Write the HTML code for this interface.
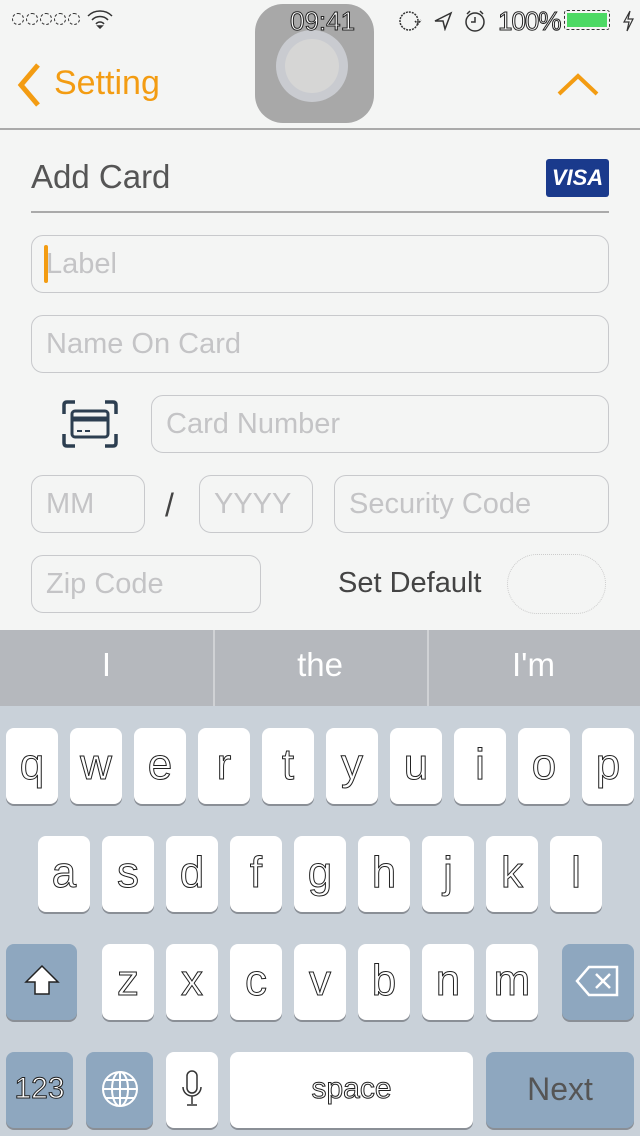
<!DOCTYPE html>
<html><head><meta charset="utf-8"><style>
*{margin:0;padding:0;box-sizing:border-box}
body{width:640px;height:1136px;overflow:hidden;background:#f4f5f4;font-family:"Liberation Sans",sans-serif;position:relative}
.a{position:absolute}
.f{position:absolute;border:1.5px solid #c8c9cc;border-radius:12px;color:#c4c4c6;font-size:29px;padding-left:14px;display:flex;align-items:center}
.kb{position:absolute;left:0;top:706px;width:640px;height:430px;background:#c9d1d9}
.k{position:absolute;width:52px;height:76px;background:#fff;border-radius:8px;box-shadow:0 2px 0 #8a8f96;font-size:44px;color:#fff;-webkit-text-stroke:1px #222;display:flex;align-items:center;justify-content:center;padding-bottom:2px}
.d{background:#8ea7bf}
.st{color:#fff;-webkit-text-stroke:1px #222}
</style></head><body>
<div class="a" style="left:12px;top:13px;display:flex;gap:2px">
<span style="width:12px;height:12px;border:1.5px dashed #333;border-radius:50%"></span><span style="width:12px;height:12px;border:1.5px dashed #333;border-radius:50%"></span><span style="width:12px;height:12px;border:1.5px dashed #333;border-radius:50%"></span><span style="width:12px;height:12px;border:1.5px dashed #333;border-radius:50%"></span><span style="width:12px;height:12px;border:1.5px dashed #333;border-radius:50%"></span></div>
<svg class="a" style="left:86px;top:9px" width="28" height="20" viewBox="0 0 28 20" fill="none" stroke="#333" stroke-width="1.5"><path d="M2 7a17 17 0 0 1 24 0M6 11a11 11 0 0 1 16 0M10 15a5 5 0 0 1 8 0"/><path d="M14 19l-2-2h4z"/></svg>
<div class="a" style="left:255px;top:4px;width:119px;height:119px;border-radius:28px;background:#a8a8a8"></div>
<div class="a" style="left:276px;top:30px;width:72px;height:72px;border-radius:50%;background:#c9cbd0"></div>
<div class="a" style="left:285px;top:39px;width:54px;height:54px;border-radius:50%;background:#d6d6d5"></div>
<div class="a st" style="left:290px;top:6px;font-size:26px">09:41</div>
<svg class="a" style="left:398px;top:9px" width="26" height="24" fill="none" stroke="#333" stroke-width="1.5" stroke-dasharray="2 1"><circle cx="11" cy="12" r="9"/><path d="M17 12l3 3 3-4"/></svg>
<svg class="a" style="left:433px;top:11px" width="20" height="20" fill="none" stroke="#333" stroke-width="1.5"><path d="M2 10L18 2L12 18L10 10Z"/></svg>
<svg class="a" style="left:463px;top:9px" width="24" height="24" fill="none" stroke="#333" stroke-width="1.5"><circle cx="12" cy="13" r="9"/><path d="M12 8v5h-4M4 5l3-3M20 5l-3-3"/></svg>
<div class="a st" style="left:498px;top:6px;font-size:26px;letter-spacing:-1px">100%</div>
<div class="a" style="left:564px;top:10px;width:46px;height:20px;border:1.5px dashed #333;border-radius:3px;padding:2px"><div style="width:100%;height:100%;background:#4cd964"></div></div>
<svg class="a" style="left:620px;top:9px" width="16" height="24" fill="none" stroke="#333" stroke-width="1.2"><path d="M10 2L4 13h5l-2 9 6-12H8z"/></svg>
<svg class="a" style="left:14px;top:62px" width="30" height="46" fill="none" stroke="#f39c12" stroke-width="5"><path d="M24 3L7 23l17 20"/></svg>
<div class="a" style="left:54px;top:64px;font-size:34px;color:#f39c12">Setting</div>
<svg class="a" style="left:556px;top:70px" width="44" height="30" fill="none" stroke="#f39c12" stroke-width="4"><path d="M3 24L22 6l19 18"/></svg>
<div class="a" style="left:0;top:128px;width:640px;height:1.5px;background:#aaa"></div>
<div class="a" style="left:31px;top:158px;font-size:33px;color:#555">Add Card</div>
<div class="a" style="left:546px;top:159px;width:63px;height:38px;background:#1a3a8c;border-radius:3px;color:#fff;font-weight:bold;font-style:italic;font-size:22px;text-align:center;line-height:38px">VISA</div>
<div class="a" style="left:31px;top:211px;width:578px;height:1.5px;background:#aaa"></div>
<div class="f" style="left:31px;top:235px;width:578px;height:58px">Label</div>
<div class="a" style="left:44px;top:245px;width:4px;height:38px;background:#f39c12;border-radius:2px"></div>
<div class="f" style="left:31px;top:315px;width:578px;height:58px">Name On Card</div>
<svg class="a" style="left:62px;top:400px" width="56" height="48" fill="none" stroke="#2c3e50" stroke-width="3.5"><path d="M2 14V5q0-3 3-3h8M43 2h8q3 0 3 3v9M54 34v9q0 3-3 3h-8M13 46H5q-3 0-3-3v-9"/><rect x="10" y="11" width="36" height="26" rx="3" stroke-width="3"/><path d="M11 19h34" stroke-width="5"/><path d="M15 31h5M23 31h5" stroke-width="2"/></svg>
<div class="f" style="left:151px;top:395px;width:458px;height:58px">Card Number</div>
<div class="f" style="left:31px;top:475px;width:114px;height:58px">MM</div>
<div class="a" style="left:165px;top:487px;font-size:32px;color:#444">/</div>
<div class="f" style="left:199px;top:475px;width:114px;height:58px">YYYY</div>
<div class="f" style="left:334px;top:475px;width:275px;height:58px">Security Code</div>
<div class="f" style="left:31px;top:555px;width:230px;height:58px">Zip Code</div>
<div class="a" style="left:338px;top:567px;font-size:29px;color:#444">Set Default</div>
<div class="a" style="left:507px;top:554px;width:99px;height:60px;border:1.5px dotted #ccc;border-radius:30px"></div>
<div class="a" style="left:0;top:630px;width:640px;height:76px;background:#b5b8bd"></div>
<div class="a" style="left:213px;top:630px;width:1.5px;height:76px;background:#d0d2d5"></div>
<div class="a" style="left:427px;top:630px;width:1.5px;height:76px;background:#d0d2d5"></div>
<div class="a" style="left:0;top:646px;width:213px;text-align:center;font-size:33px;color:#fff">I</div>
<div class="a" style="left:213px;top:646px;width:214px;text-align:center;font-size:33px;color:#fff">the</div>
<div class="a" style="left:427px;top:646px;width:213px;text-align:center;font-size:33px;color:#fff">I'm</div>
<div class="kb"></div>
<div class="k" style="left:6px;top:728px">q</div><div class="k" style="left:70px;top:728px">w</div><div class="k" style="left:134px;top:728px">e</div><div class="k" style="left:198px;top:728px">r</div><div class="k" style="left:262px;top:728px">t</div><div class="k" style="left:326px;top:728px">y</div><div class="k" style="left:390px;top:728px">u</div><div class="k" style="left:454px;top:728px">i</div><div class="k" style="left:518px;top:728px">o</div><div class="k" style="left:582px;top:728px">p</div>
<div class="k" style="left:38px;top:836px">a</div><div class="k" style="left:102px;top:836px">s</div><div class="k" style="left:166px;top:836px">d</div><div class="k" style="left:230px;top:836px">f</div><div class="k" style="left:294px;top:836px">g</div><div class="k" style="left:358px;top:836px">h</div><div class="k" style="left:422px;top:836px">j</div><div class="k" style="left:486px;top:836px">k</div><div class="k" style="left:550px;top:836px">l</div>
<div class="k d" style="left:6px;top:944px;width:71px"><svg width="40" height="38" fill="#fff" stroke="#222" stroke-width="1.5"><path d="M20 4L4 20h9v12h14V20h9z"/></svg></div>
<div class="k" style="left:102px;top:944px">z</div><div class="k" style="left:166px;top:944px">x</div><div class="k" style="left:230px;top:944px">c</div><div class="k" style="left:294px;top:944px">v</div><div class="k" style="left:358px;top:944px">b</div><div class="k" style="left:422px;top:944px">n</div><div class="k" style="left:486px;top:944px">m</div>
<div class="k d" style="left:562px;top:944px;width:72px"><svg width="46" height="36" fill="none" stroke="#fff" stroke-width="2.5"><path d="M14 4h28v28H14L2 18z"/><path d="M21 11l14 14M35 11L21 25"/></svg></div>
<div class="k d" style="left:6px;top:1052px;width:67px;font-size:30px">123</div>
<div class="k d" style="left:86px;top:1052px;width:67px"><svg width="40" height="40" fill="none" stroke="#fff" stroke-width="2"><circle cx="20" cy="20" r="17"/><ellipse cx="20" cy="20" rx="8" ry="17"/><path d="M3 20h34M20 3v34M6 11h28M6 29h28"/></svg></div>
<div class="k" style="left:166px;top:1052px"><svg width="24" height="40" fill="none" stroke="#333" stroke-width="1.5"><rect x="7" y="2" width="10" height="22" rx="5"/><path d="M3 18a9 9 0 0 0 18 0M12 27v8M7 36h10"/></svg></div>
<div class="k" style="left:230px;top:1052px;width:243px;font-size:30px">space</div>
<div class="k d" style="left:486px;top:1052px;width:148px;font-size:32px;color:#555;-webkit-text-stroke:0">Next</div>
</body></html>
